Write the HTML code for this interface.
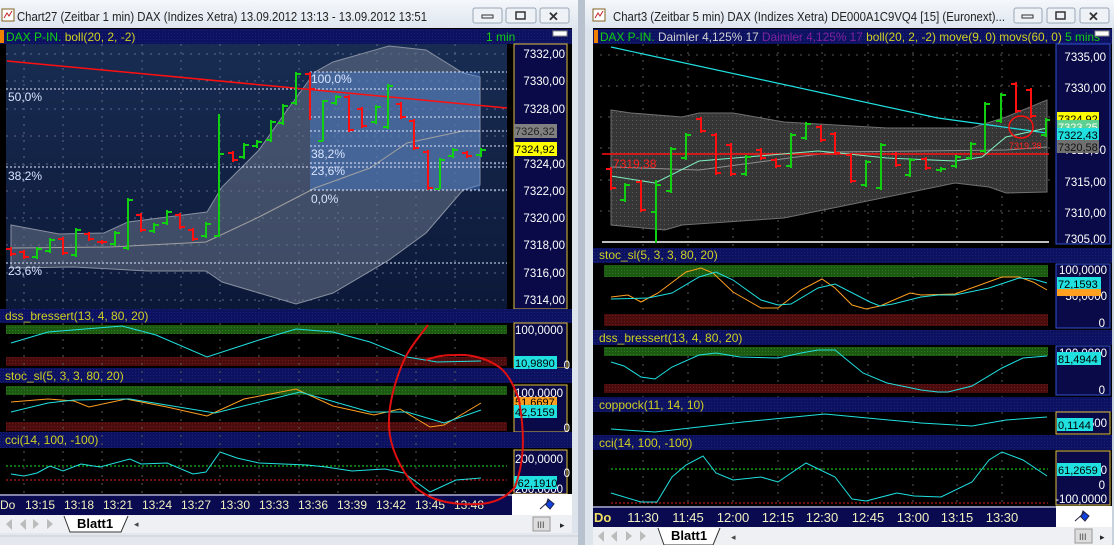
<!DOCTYPE html>
<html><head><meta charset="utf-8">
<style>
html,body{margin:0;padding:0;background:#d4d8e0;width:1114px;height:545px;overflow:hidden}
svg{display:block}
text{font-family:"Liberation Sans",Arial,sans-serif}
</style></head>
<body>
<svg id="s" width="1114" height="545" viewBox="0 0 1114 545" xmlns="http://www.w3.org/2000/svg">
<defs>
<linearGradient id="tb" x1="0" y1="0" x2="0" y2="1"><stop offset="0" stop-color="#f4f7fb"/><stop offset="1" stop-color="#dfe6ef"/></linearGradient>
<linearGradient id="lbg" x1="0" y1="0" x2="0" y2="1"><stop offset="0" stop-color="#182c52"/><stop offset="1" stop-color="#0c1838"/></linearGradient>
<pattern id="dots" width="4" height="4" patternUnits="userSpaceOnUse"><rect width="4" height="4" fill="#363636"/><rect width="1" height="1" fill="#5a5a5a"/></pattern>
<pattern id="gdots" width="3" height="3" patternUnits="userSpaceOnUse"><rect width="3" height="3" fill="#1c5a12"/><rect width="1" height="1" fill="#2f7a22"/></pattern>
<pattern id="rdots" width="3" height="3" patternUnits="userSpaceOnUse"><rect width="3" height="3" fill="#4a0c0c"/><rect width="1" height="1" fill="#6e1a1a"/></pattern>
<pattern id="ndots" width="3" height="3" patternUnits="userSpaceOnUse"><rect width="3" height="3" fill="#0c1260"/><rect width="1" height="1" fill="#1a2278"/></pattern>
</defs>

<!-- ============ LEFT WINDOW ============ -->
<rect x="0" y="0" width="578" height="545" fill="#dde4ec"/>
<rect x="0" y="0" width="578" height="28" fill="url(#tb)"/>
<rect x="2" y="9" width="12" height="12" fill="#fff" stroke="#806020"/><path d="M4 18 L7 13 L9 16 L12 11" stroke="#c02020" fill="none"/>
<text x="17" y="21" font-size="12.5" fill="#222" textLength="410" lengthAdjust="spacingAndGlyphs">Chart27 (Zeitbar 1 min)  DAX (Indizes Xetra) 13.09.2012 13:13 - 13.09.2012 13:51</text>
<g fill="#eef2f7" stroke="#9aa6b6"><rect x="473" y="8" width="29" height="15" rx="2"/><rect x="506" y="8" width="30" height="15" rx="2"/><rect x="540" y="8" width="29" height="15" rx="2"/></g>
<rect x="482" y="15" width="11" height="3" fill="none" stroke="#333"/>
<rect x="516" y="12" width="9" height="7" fill="none" stroke="#333" stroke-width="1.5"/>
<text x="548" y="21" font-size="13" fill="#333" font-weight="bold">✕</text>

<rect x="0" y="28" width="572" height="486" fill="#000"/>
<rect x="0" y="29" width="572" height="15" fill="url(#ndots)"/>
<rect x="0" y="30" width="4" height="13" fill="#f08000"/>
<text x="6" y="41" font-size="12"><tspan fill="#10d010">DAX P-IN. </tspan><tspan fill="#d0d020">boll(20, 2, -2)</tspan></text>
<text x="486" y="41" font-size="12" fill="#10d010">1 min</text>
<rect x="553" y="31" width="14" height="5" fill="#fff" stroke="#888"/>

<rect x="6" y="44" width="501" height="265" fill="url(#lbg)"/>
<g stroke="#5a6a8a" stroke-dasharray="2,6" stroke-width="1">
<path d="M24 44V309M63 44V309M102 44V309M142 44V309M181 44V309M220 44V309M259 44V309M299 44V309M338 44V309M377 44V309M416 44V309M455 44V309"/>
<path d="M6 54H507M6 81H507M6 109H507M6 136H507M6 164H507M6 191H507M6 218H507M6 245H507M6 273H507M6 300H507"/>
</g>
<polygon points="11,225 59,234 104,233 128,222 207,212 222,187 259,150 285,113 315,72 333,62 389,46 426,50 463,73 480,77 480,185 463,190 426,233 389,260 333,293 296,304 222,282 206,271 148,271 74,267 11,268" fill="#6a7488" fill-opacity="0.55" stroke="#8890a0"/>
<rect x="310" y="72" width="170" height="118" fill="#4a7ed0" fill-opacity="0.45"/>
<polyline points="11,248 111,247 206,242 259,217 315,188 370,168 407,143 463,131 480,131" fill="none" stroke="#a0a0a0"/>
<g stroke="#e0e8ff" stroke-dasharray="2,2" stroke-width="1">
<path d="M6 89H507M6 167H507M6 263H507M310 72H507M310 117H507M310 131H507M310 146H507M310 163H507M310 190H507"/>
</g>
<path d="M7 61 L507 108" stroke="#ff1010" stroke-width="1.5" fill="none"/>
<g font-size="12" fill="#d8e4ff">
<text x="311" y="83">100,0%</text><text x="8" y="101">50,0%</text><text x="311" y="158">38,2%</text><text x="311" y="175">23,6%</text><text x="311" y="203">0,0%</text><text x="8" y="180">38,2%</text><text x="8" y="275">23,6%</text>
</g>
<g id="lbars" stroke-width="2" fill="none"></g>
<rect x="507" y="44" width="6" height="265" fill="#000"/>
<rect x="514" y="44" width="53" height="265" fill="#0a0a48" stroke="#e0c040"/>
<g font-size="11.5" fill="#fff" text-anchor="end">
<text x="565" y="58">7332,00</text><text x="565" y="85">7330,00</text><text x="565" y="113">7328,00</text><text x="565" y="168">7324,00</text><text x="565" y="195">7322,00</text><text x="565" y="222">7320,00</text><text x="565" y="249">7318,00</text><text x="565" y="277">7316,00</text><text x="565" y="304">7314,00</text>
</g>
<rect x="514" y="124" width="43" height="14" fill="#808080"/><text x="515" y="135" font-size="11" fill="#222">7326,32</text>
<rect x="514" y="142" width="43" height="14" fill="#ffff00"/><text x="515" y="153" font-size="11" fill="#000">7324,92</text>

<rect x="0" y="309" width="572" height="14" fill="url(#ndots)"/>
<text x="5" y="320" font-size="12" fill="#d0d020">dss_bressert(13, 4, 80, 20)</text>
<rect x="6" y="325" width="501" height="9" fill="url(#gdots)"/><rect x="6" y="357" width="501" height="9" fill="url(#rdots)"/>
<polyline points="11,343 48,332 122,326 156,335 207,357 259,340 296,329 333,332 370,342 407,357 437,362 481,361" fill="none" stroke="#20e0e0"/>
<rect x="514" y="323" width="53" height="45" fill="#0a0a48" stroke="#e0c040"/>
<rect x="0" y="368" width="572" height="15" fill="url(#ndots)"/>
<text x="5" y="380" font-size="12" fill="#d0d020">stoc_sl(5, 3, 3, 80, 20)</text>
<rect x="6" y="386" width="501" height="9" fill="url(#gdots)"/><rect x="6" y="422" width="501" height="9" fill="url(#rdots)"/>
<polyline points="11,402 48,399 74,401 89,407 126,399 167,407 207,416 244,399 296,389 333,406 374,415 400,409 430,427 444,425 481,403" fill="none" stroke="#ffa020"/>
<polyline points="11,412 48,403 74,400 130,399 215,413 300,392 370,412 407,412 444,423 481,410" fill="none" stroke="#20e0e0"/>
<rect x="514" y="385" width="53" height="47" fill="#0a0a48" stroke="#e0c040"/>
<rect x="0" y="432" width="572" height="16" fill="url(#ndots)"/>
<text x="5" y="444" font-size="12" fill="#d0d020">cci(14, 100, -100)</text>
<path d="M6 466H507" stroke="#20e020" stroke-dasharray="2,2"/><path d="M6 480H507" stroke="#e02020" stroke-dasharray="2,2"/>
<polyline points="11,474 24,476 37,473 50,466 63,471 81,464 100,467 130,459 141,464 167,463 193,474 206,472 220,452 237,458 259,463 307,465 326,467 352,471 385,469 404,473 430,492 456,480 481,478" fill="none" stroke="#20e0e0"/>
<rect x="514" y="450" width="53" height="44" fill="#0a0a48" stroke="#e0c040"/>
<g stroke="#5a5a5a" stroke-dasharray="2,6"><path d="M24 323V494M63 323V494M102 323V494M142 323V494M181 323V494M220 323V494M259 323V494M299 323V494M338 323V494M377 323V494M416 323V494M455 323V494"/></g>
<g font-size="11.5" fill="#fff" text-anchor="end">
<text x="563" y="334">100,0000</text><text x="570" y="369">0</text>
<text x="563" y="397">100,0000</text><text x="570" y="432">0</text>
<text x="563" y="463">200,0000</text><text x="570" y="477">0</text><text x="563" y="493">-200,0000</text>
</g>
<rect x="514" y="356" width="43" height="13" fill="#20e0e0"/><text x="515" y="367" font-size="11" fill="#000">10,9890</text>
<rect x="514" y="397" width="43" height="10" fill="#ffa020"/><text x="515" y="406" font-size="11" fill="#000">51,6697</text>
<rect x="514" y="405" width="43" height="13" fill="#20e0e0"/><text x="515" y="416" font-size="11" fill="#000">42,5159</text>
<rect x="514" y="476" width="43" height="13" fill="#20e0e0"/><text x="514" y="487" font-size="11" fill="#000">-62,1910</text>
<rect x="0" y="494" width="512" height="21" fill="#0a0a50"/><path d="M0 495H512" stroke="#fff"/>
<rect x="512" y="494" width="60" height="21" fill="#fff"/>
<path d="M540 509 L550 500 M548 499 l6 5 l-4 5 l-4 -4z" stroke="#224" fill="#1040e0"/>
<g font-size="12" fill="#f0f0c0"><text x="0" y="509">Do</text>
<text x="25" y="509">13:15</text><text x="64" y="509">13:18</text><text x="103" y="509">13:21</text><text x="142" y="509">13:24</text><text x="181" y="509">13:27</text><text x="220" y="509">13:30</text><text x="259" y="509">13:33</text><text x="298" y="509">13:36</text><text x="337" y="509">13:39</text><text x="376" y="509">13:42</text><text x="415" y="509">13:45</text><text x="454" y="509">13:48</text></g>
<rect x="0" y="515" width="572" height="18" fill="#eef0f3"/>
<g fill="#bbb"><path d="M4 519v11M6 524l6-5v11zM20 524l6-5v11zM33 519l6 5-6 5zM47 519l6 5-6 5zM55 519v11"/></g>
<path d="M64 516 L70 532 L121 532 L128 516" fill="#fff" stroke="#333"/>
<text x="77" y="528" font-size="13" font-weight="bold" fill="#000">Blatt1</text>
<text x="134" y="527" font-size="9" fill="#444">◂</text>
<rect x="533" y="517" width="17" height="14" fill="#ddd" stroke="#999"/><text x="537" y="528" font-size="9" fill="#444">III</text><text x="560" y="528" font-size="9" fill="#222">▸</text>
<rect x="0" y="533" width="578" height="12" fill="#e4e8ee"/><path d="M0 536H578" stroke="#c8ccd4"/>
<rect x="572" y="28" width="6" height="505" fill="#dde4ec"/>

<!-- ============ RIGHT WINDOW ============ -->
<rect x="578" y="0" width="7" height="545" fill="#b8c2ce"/>
<rect x="585" y="0" width="529" height="545" fill="#dde4ec"/>
<rect x="585" y="0" width="529" height="28" fill="url(#tb)"/>
<rect x="593" y="9" width="12" height="12" fill="#fff" stroke="#806020"/><path d="M595 18 L598 13 L600 16 L603 11" stroke="#c02020" fill="none"/>
<text x="613" y="21" font-size="12.5" fill="#222" textLength="392" lengthAdjust="spacingAndGlyphs">Chart3 (Zeitbar 5 min)  DAX (Indizes Xetra) DE000A1C9VQ4 [15] (Euronext)...</text>
<g fill="#eef2f7" stroke="#9aa6b6"><rect x="1014" y="8" width="28" height="15" rx="2"/><rect x="1047" y="8" width="28" height="15" rx="2"/><rect x="1080" y="8" width="29" height="15" rx="2"/></g>
<rect x="1022" y="15" width="11" height="3" fill="none" stroke="#333"/>
<rect x="1056" y="12" width="9" height="7" fill="none" stroke="#333" stroke-width="1.5"/>
<text x="1088" y="21" font-size="13" fill="#333" font-weight="bold">✕</text>
<rect x="593" y="28" width="519" height="500" fill="#000"/>
<rect x="593" y="29" width="519" height="15" fill="url(#ndots)"/>
<rect x="594" y="30" width="4" height="13" fill="#f08000"/>
<text x="600" y="41" font-size="12" textLength="500" lengthAdjust="spacingAndGlyphs"><tspan fill="#10d010">DAX P-IN. </tspan><tspan fill="#d0d0d0">Daimler  4,125% 17 </tspan><tspan fill="#8020a0">Daimler  4,125% 17 </tspan><tspan fill="#d0d020">boll(20, 2, -2) move(9, 0) movs(60, 0)</tspan><tspan fill="#10d010">    5 mins</tspan></text>
<rect x="1095" y="31" width="14" height="5" fill="#fff" stroke="#888"/>

<g stroke="#5a5a5a" stroke-dasharray="2,6"><path d="M643 44V505M688 44V505M733 44V505M778 44V505M822 44V505M868 44V505M913 44V505M957 44V505M1002 44V505"/>
<path d="M600 55H1050M600 86H1050M600 117H1050M600 148H1050M600 180H1050M600 211H1050"/></g>
<polygon points="611,110 631,113 682,117 699,113 733,113 784,122 887,128 972,128 1006,117 1047,100 1047,192 1006,193 989,187 955,183 887,197 784,218 682,225 665,230 611,225" fill="url(#dots)" stroke="#707070"/>
<path d="M602 242H1049" stroke="#fff" stroke-width="1.5"/>
<polyline points="611,167 699,170 835,152 1006,150 1047,147" fill="none" stroke="#909090"/>
<path d="M602 154H1049" stroke="#ff1010" stroke-width="1.5"/>
<polyline points="611,47 938,118 989,125 1047,133" fill="none" stroke="#20e0e0" stroke-width="1.2"/>
<polyline points="611,176 655,183 699,161 818,151 839,153 887,158 955,161 982,157 1006,137 1047,128" fill="none" stroke="#80f0c0"/>
<text x="613" y="168" font-size="12" fill="#ff2020">7319,38</text>
<g id="rbars" stroke-width="2" fill="none"></g>
<ellipse cx="1021" cy="127" rx="12" ry="11" stroke="#ff1010" stroke-width="1.5" fill="none"/>
<text x="1009" y="149" font-size="9" fill="#ff2020">7319,38</text>
<rect x="1050" y="44" width="6" height="200" fill="#000"/>
<rect x="1056" y="44" width="54" height="200" fill="#0a0a48" stroke="#3050d0"/>
<g font-size="11.5" fill="#fff" text-anchor="end"><text x="1106" y="61">7335,00</text><text x="1106" y="92">7330,00</text><text x="1106" y="154">7320,00</text><text x="1106" y="186">7315,00</text><text x="1106" y="217">7310,00</text><text x="1106" y="243">7305,00</text></g>
<rect x="1057" y="112" width="42" height="13" fill="#ffff00"/><text x="1058" y="123" font-size="11" fill="#000">7324,92</text>
<rect x="1057" y="120" width="42" height="11" fill="#60d090"/><text x="1058" y="131" font-size="11" fill="#fff">7323,25</text>
<rect x="1057" y="128" width="42" height="13" fill="#20e0e0"/><text x="1058" y="139" font-size="11" fill="#000">7322,43</text>
<rect x="1057" y="140" width="42" height="13" fill="#707070"/><text x="1058" y="151" font-size="11" fill="#111">7320,58</text>

<rect x="593" y="248" width="519" height="15" fill="url(#ndots)"/>
<text x="599" y="259" font-size="12" fill="#d0d020">stoc_sl(5, 3, 3, 80, 20)</text>
<rect x="604" y="265" width="444" height="12" fill="url(#gdots)"/><rect x="604" y="314" width="444" height="12" fill="url(#rdots)"/>
<polyline points="611,297 628,295 641,302 658,293 686,272 701,268 713,273 733,292 761,308 778,308 801,290 822,279 835,288 852,305 866,309 880,306 910,293 921,295 955,294 1002,277 1019,277 1033,282 1047,290" fill="none" stroke="#ffa020"/>
<polyline points="611,299 648,298 672,293 699,277 716,272 733,280 761,300 778,305 791,304 818,288 835,284 870,302 880,306 893,304 921,297 938,295 955,295 989,288 1019,278 1033,279 1047,283" fill="none" stroke="#20e0e0"/>
<rect x="1056" y="264" width="54" height="64" fill="#0a0a48" stroke="#3050d0"/>
<rect x="593" y="330" width="519" height="15" fill="url(#ndots)"/>
<text x="599" y="342" font-size="12" fill="#d0d020">dss_bressert(13, 4, 80, 20)</text>
<rect x="604" y="347" width="444" height="9" fill="url(#gdots)"/><rect x="604" y="384" width="444" height="9" fill="url(#rdots)"/>
<polyline points="611,362 624,366 641,377 655,379 672,367 699,355 716,353 740,357 778,358 801,353 818,350 835,350 863,373 887,383 921,390 938,392 948,392 972,386 1002,368 1023,358 1047,356" fill="none" stroke="#20e0e0"/>
<rect x="1056" y="346" width="54" height="49" fill="#0a0a48" stroke="#3050d0"/>
<rect x="593" y="397" width="519" height="15" fill="url(#ndots)"/>
<text x="599" y="409" font-size="12" fill="#d0d020">coppock(11, 14, 10)</text>
<polyline points="611,429 655,432 743,422 825,414 921,423 972,426 1006,420 1047,417" fill="none" stroke="#20e0e0"/>
<rect x="1056" y="412" width="54" height="22" fill="#0a0a48" stroke="#e0c040"/>
<rect x="593" y="435" width="519" height="15" fill="url(#ndots)"/>
<text x="599" y="447" font-size="12" fill="#d0d020">cci(14, 100, -100)</text>
<path d="M611 469H1048" stroke="#20e020" stroke-dasharray="2,2"/><path d="M611 503H1048" stroke="#e02020" stroke-dasharray="2,2"/>
<polyline points="611,493 641,502 657,502 672,477 686,465 703,456 716,473 733,480 761,477 778,482 806,463 835,477 852,499 866,501 897,493 914,496 941,497 972,482 989,460 1002,452 1023,460 1047,476" fill="none" stroke="#20e0e0"/>
<rect x="1056" y="451" width="54" height="54" fill="#0a0a48" stroke="#e0c040"/>
<g font-size="11.5" fill="#fff" text-anchor="end">
<text x="1107" y="274">100,0000</text><text x="1107" y="300">50,0000</text><text x="1105" y="327">0</text>
<text x="1107" y="357">100,0000</text><text x="1105" y="394">0</text>
<text x="1107" y="427">500</text>
<text x="1107" y="474">100,0000</text><text x="1105" y="489">0</text><text x="1107" y="503">-100,0000</text></g>
<rect x="1057" y="277" width="44" height="12" fill="#20e0e0"/><text x="1058" y="288" font-size="11" fill="#000">72,1593</text>
<rect x="1057" y="289" width="44" height="7" fill="#ffa020"/>
<rect x="1057" y="352" width="44" height="13" fill="#20e0e0"/><text x="1058" y="363" font-size="11" fill="#000">81,4944</text>
<rect x="1057" y="418" width="36" height="13" fill="#20e0e0"/><text x="1058" y="429" font-size="11" fill="#000">0,1144</text>
<rect x="1057" y="463" width="44" height="13" fill="#20e0e0"/><text x="1058" y="474" font-size="11" fill="#000">61,2659</text>
<rect x="593" y="506" width="463" height="21" fill="#0a0a50"/><path d="M593 507H1056" stroke="#fff"/>
<rect x="1056" y="506" width="56" height="21" fill="#fff"/>
<path d="M1075 521 L1085 512 M1083 511 l6 5 l-4 5 l-4 -4z" stroke="#224" fill="#1040e0"/>
<text x="594" y="522" font-size="13" font-weight="bold" fill="#f0e060">Do</text>
<g font-size="13" fill="#f0f0c0" text-anchor="middle"><text x="643" y="522">11:30</text><text x="688" y="522">11:45</text><text x="733" y="522">12:00</text><text x="778" y="522">12:15</text><text x="822" y="522">12:30</text><text x="868" y="522">12:45</text><text x="913" y="522">13:00</text><text x="957" y="522">13:15</text><text x="1002" y="522">13:30</text></g>
<rect x="593" y="527" width="519" height="18" fill="#eef0f3"/>
<g fill="#bbb"><path d="M596 531v11M598 536l6-5v11zM611 536l6-5v11zM626 531l6 5-6 5zM640 531l6 5-6 5zM648 531v11"/></g>
<path d="M658 528 L664 545 L713 545 L720 528" fill="#fff" stroke="#333"/>
<text x="671" y="540" font-size="13" font-weight="bold" fill="#000">Blatt1</text>
<text x="731" y="540" font-size="9" fill="#444">◂</text>
<rect x="1075" y="529" width="17" height="14" fill="#ddd" stroke="#999"/><text x="1079" y="540" font-size="9" fill="#444">III</text><text x="1100" y="540" font-size="9" fill="#222">▸</text>
<rect x="1112" y="28" width="2" height="517" fill="#c8d2de"/>

<path d="M428 325 C418 338 410 348 405 358 C395 380 388 405 389 427 C390 447 400 468 415 487 C428 498 440 502 460 504 C480 505 500 505 515 487 C523 465 526 440 519 400 C512 380 505 370 496 365 C485 358 470 354 455 355 C445 355 437 356 426 360" fill="none" stroke="#e01010" stroke-width="2"/>
</svg>
<script>
function bars(id,list){var g=document.getElementById(id),h='';list.forEach(function(b){var x=b[0],hi=b[1],lo=b[2],c=b[3];var col=c?'#10d010':'#ff1010';var o=c?lo-2:hi+2,cl=c?hi+2:lo-2;if(b[4]!==undefined)o=b[4];if(b[5]!==undefined)cl=b[5];h+='<path stroke="'+col+'" d="M'+x+' '+hi+'V'+lo+'M'+(x-5)+' '+o+'H'+x+'M'+x+' '+cl+'H'+(x+5)+'"/>';});g.innerHTML=h;}
bars('lbars',[[11,247,256,0],[24,250,259,0],[37,247,259,1],[50,238,253,1],[63,237,255,0],[76,228,257,1],[89,232,241,0],[102,240,244,0],[115,231,246,1],[128,198,250,1],[141,213,232,0],[154,223,233,1],[167,210,225,1],[180,213,229,0],[193,228,241,0],[206,222,238,1],[219,114,237,1,236,154],[233,151,162,0],[244,143,159,1],[257,140,148,1],[271,120,142,1],[283,104,125,1],[296,72,105,1],[310,72,120,0,74,89],[323,100,141,1,141,101],[336,95,105,1],[349,95,132,0],[362,107,128,0],[376,105,124,1],[388,84,129,1],[401,102,119,0],[414,119,150,0],[428,150,190,0],[440,158,189,1,189,160],[453,148,158,1],[467,151,158,0],[481,148,157,1]]);
bars('rbars',[[611,167,190,0],[625,183,202,1],[641,180,212,0],[656,180,243,1,212,185],[671,147,193,1],[686,133,160,1],[701,117,133,0],[716,133,175,0],[731,143,176,0],[746,155,176,1],[761,148,160,0],[776,158,168,0],[791,133,168,1],[806,122,140,1],[821,125,142,0],[835,132,155,0],[851,153,183,0],[866,160,187,1],[881,143,190,1],[896,152,167,0],[910,158,177,1],[926,157,170,0],[941,167,172,1],[956,155,168,1],[971,142,160,1],[985,102,153,1],[1001,93,123,1],[1016,82,113,0],[1031,88,118,0],[1046,118,137,1]]);
</script>
</body></html>
